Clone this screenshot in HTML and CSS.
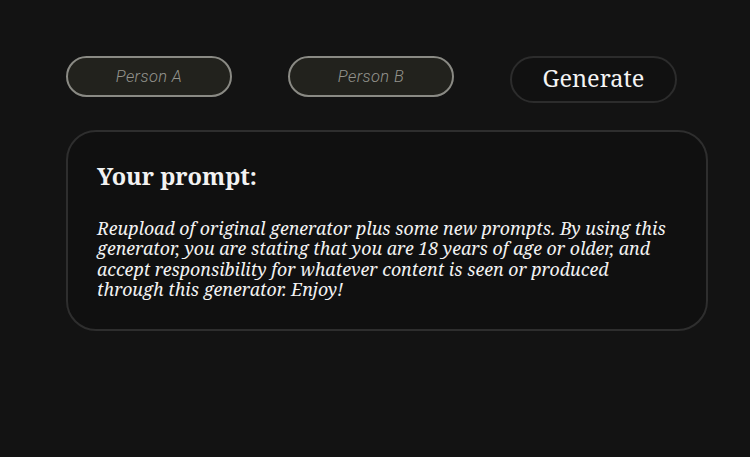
FILE: index.html
```html
<!DOCTYPE html>
<html lang="en">
<head>
<meta charset="utf-8">
<title>Prompt generator</title>
<link rel="stylesheet" href="styles.css">
</head>
<body>
<main class="page">
  <div class="controls">
    <input class="name-input" type="text" placeholder="Person A">
    <input class="name-input" type="text" placeholder="Person B">
    <button class="generate" type="button">Generate</button>
  </div>
  <section class="card">
    <h2 class="card-title">Your prompt:</h2>
    <p class="card-text">Reupload of original generator plus some new prompts. By using this generator, you are stating that you are 18 years of age or older, and accept responsibility for whatever content is seen or produced through this generator. Enjoy!</p>
  </section>
</main>
</body>
</html>
```
FILE: styles.css
```css
html, body {
  margin: 0;
  padding: 0;
  background: #131313;
  height: 100%;
}
.page {
  padding: 56px 0 0 66px;
  width: 642px;
  font-family: "Noto Serif", "DejaVu Serif", serif;
}
.controls {
  display: flex;
  align-items: flex-start;
  gap: 56px;
}
.name-input {
  box-sizing: border-box;
  width: 166px;
  height: 41px;
  border: 2px solid #8a8a84;
  border-radius: 21px;
  background: #22221d;
  color: #ddd;
  font-family: Roboto, "Noto Sans", sans-serif;
  font-style: italic;
  font-weight: 300;
  font-size: 16.5px;
  letter-spacing: 0.4px;
  text-align: center;
  outline: none;
  padding: 0 10px 0 10px;
}
.name-input::placeholder {
  color: #94948d;
}
.generate {
  box-sizing: border-box;
  width: 167px;
  height: 47px;
  border: 2px solid #2c2c2c;
  border-radius: 24px;
  background: #111111;
  color: #f4f4f4;
  font-family: "Noto Serif", "DejaVu Serif", serif;
  font-size: 23.5px;
  padding: 0 0 3px 0;
}
.card {
  box-sizing: border-box;
  margin-top: 27px;
  width: 642px;
  height: 201px;
  border: 2px solid #2e2e2e;
  border-radius: 30px;
  background: #101010;
  padding: 27px 29px 0 29px;
  color: #f2f2f2;
}
.card-title {
  margin: 0;
  font-size: 23.5px;
  font-weight: bold;
  line-height: 34px;
}
.card-text {
  margin: 25px 0 0 0;
  font-style: italic;
  font-size: 17.8px;
  line-height: 20.3px;
}
```
